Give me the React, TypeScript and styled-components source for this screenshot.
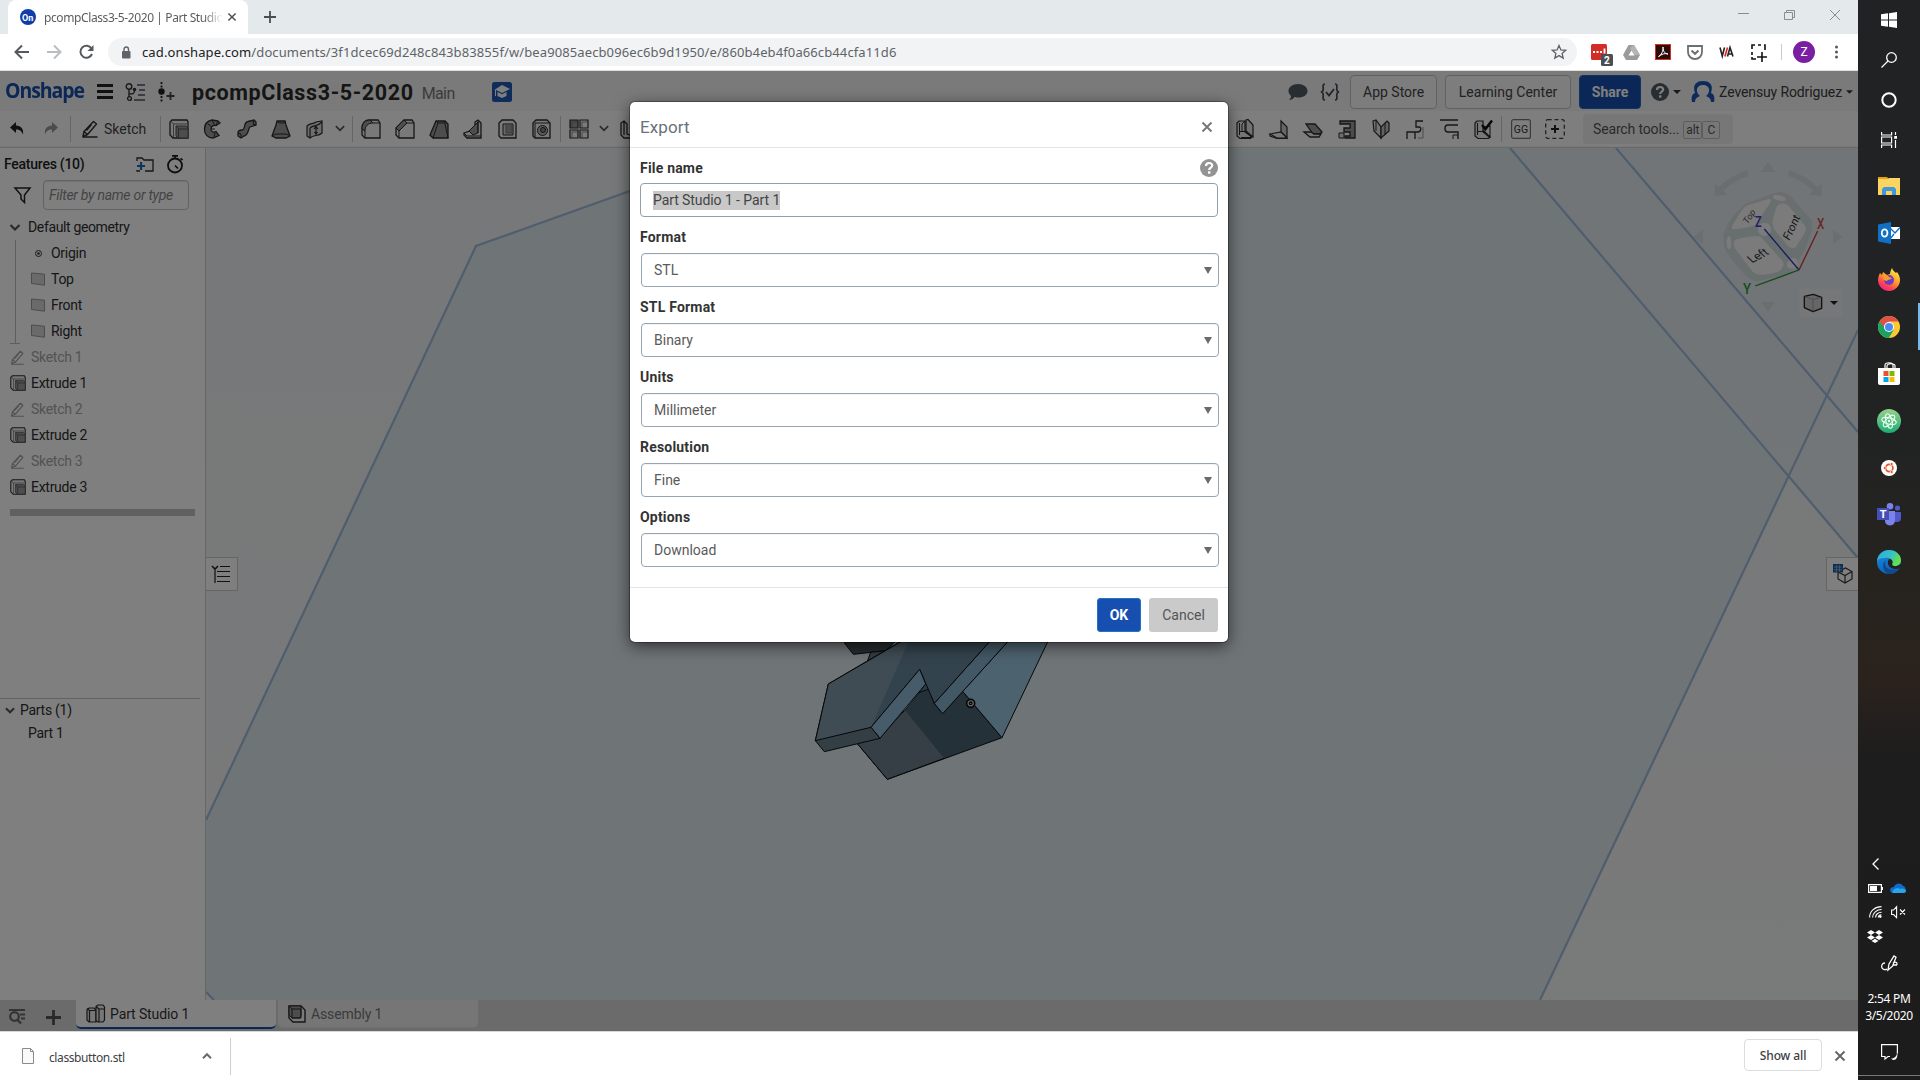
import React from "react";
import styled, { createGlobalStyle } from "styled-components";

const UI = `Roboto, "Liberation Sans", sans-serif`;
const SYS = `"Noto Sans", "Open Sans", sans-serif`;

const Global = createGlobalStyle`
  * { box-sizing: border-box; }
  html, body { margin: 0; padding: 0; background: #fff; overflow: hidden; }
  body { font-family: ${UI}; font-size: 14px; color: #333; }
  svg { display: block; flex: none; overflow: visible; }
`;

/* ---------- shared ---------- */
const Screen = styled.div`
  width: 1920px;
  height: 1080px;
  display: flex;
  overflow: hidden;
`;
const Browser = styled.div`
  width: 1858px;
  display: flex;
  flex-direction: column;
`;
const Label = styled.span<{ $ls?: number; $size?: number; $w?: number; $color?: string; $sys?: boolean; $drop?: number }>`
  white-space: pre;
  font-family: ${(p) => (p.$sys ? SYS : UI)};
  font-size: ${(p) => p.$size ?? 14}px;
  font-weight: ${(p) => p.$w ?? 400};
  letter-spacing: ${(p) => p.$ls ?? 0}px;
  color: ${(p) => p.$color ?? "inherit"};
  margin-top: ${(p) => p.$drop ?? 0}px;
`;
const Spacer = styled.div<{ $w?: number }>`
  ${(p) => (p.$w === undefined ? "flex: 1;" : `width: ${p.$w}px; flex: none;`)}
`;
const VSpace = styled.div<{ $h: number }>`
  height: ${(p) => p.$h}px;
  flex: none;
`;
const Slot = styled.div<{ $w?: number }>`
  width: ${(p) => p.$w ?? 34}px;
  flex: none;
  display: flex;
  align-items: center;
  justify-content: center;
`;

type IcoProps = { w?: number; h?: number; vb?: string; children: React.ReactNode };
const Ico = ({ w = 20, h = 20, vb, children }: IcoProps) => (
  <svg width={w} height={h} viewBox={vb ?? `0 0 ${w} ${h}`} fill="none">
    {children}
  </svg>
);

/* ---------- browser chrome ---------- */
const TabStrip = styled.div`
  height: 34px;
  background: #e4e9ec;
  display: flex;
  align-items: center;
  padding-left: 8px;
`;
const Tab = styled.div`
  width: 240px;
  height: 34px;
  background: #fff;
  border-radius: 8px 8px 0 0;
  display: flex;
  align-items: center;
  padding: 0 10px 0 12px;
`;
const TabTitle = styled.div`
  width: 182px;
  margin: 0 0 0 8px;
  white-space: nowrap;
  font: 12px ${SYS};
  letter-spacing: -0.4px;
  color: #5a5d60;
  mask-image: linear-gradient(90deg, #000 88%, transparent 98%);
`;
const NavBar = styled.div`
  height: 37px;
  background: #fff;
  border-bottom: 1px solid #dcdfe0;
  display: flex;
  align-items: center;
`;
const UrlPill = styled.div`
  width: 1469px;
  height: 28px;
  border-radius: 14px;
  background: #f1f3f4;
  display: flex;
  align-items: center;
  padding: 0 10px 0 13px;
`;
const Avatar = styled.div`
  width: 22px;
  height: 22px;
  border-radius: 50%;
  background: #7b1fa2;
  color: #fff;
  font: 12px/22px ${UI};
  text-align: center;
`;

/* ---------- application ---------- */
const Application = styled.div`
  position: relative;
  height: 960px;
  display: flex;
  flex-direction: column;
`;
const Header = styled.div`
  height: 40px;
  background: #f5f5f5;
  display: flex;
  align-items: center;
  padding-top: 1px;
`;
const Logo = styled.span`
  width: 79px;
  margin-left: 5px;
  margin-top: -4px;
  font: 700 21.5px/26px "Open Sans", sans-serif;
  letter-spacing: -1.15px;
  color: #174fa9;
  white-space: nowrap;
  transform: scaleX(0.905);
  transform-origin: left;
`;
const HeaderButton = styled.div<{ $w: number; $primary?: boolean }>`
  width: ${(p) => p.$w}px;
  height: 34px;
  border: 1px solid ${(p) => (p.$primary ? "#1f6bc0" : "#c2c2c2")};
  border-radius: 4px;
  background: ${(p) => (p.$primary ? "#174fb0" : "#fbfbfb")};
  color: ${(p) => (p.$primary ? "#fff" : "#444")};
  font-weight: ${(p) => (p.$primary ? 700 : 400)};
  display: flex;
  align-items: center;
  justify-content: center;
`;
const Toolbar = styled.div`
  height: 36px;
  background: #fdfdfd;
  border-bottom: 1px solid #f3f4f5;
  display: flex;
  align-items: center;
`;
const Sep = styled.div<{ $l?: number; $r?: number }>`
  width: 1px;
  height: 26px;
  flex: none;
  background: #cdcdcd;
  margin: 0 ${(p) => p.$r ?? 1}px 0 ${(p) => p.$l ?? 2}px;
`;
const SearchTools = styled.div`
  width: 150px;
  height: 30px;
  border-radius: 4px;
  background: #efefef;
  display: flex;
  align-items: center;
  padding-left: 10px;
  color: #555;
`;
const Key = styled.span<{ $w: number }>`
  width: ${(p) => p.$w}px;
  height: 18px;
  border: 1px solid #bbb;
  border-radius: 2px;
  font-size: 12px;
  line-height: 16px;
  text-align: center;
  margin-top: 2px;
  color: #555;
`;
const Workspace = styled.div`
  height: 853px;
  display: flex;
  border-top: 1px solid #d0d2d4;
`;
const Sidebar = styled.div`
  width: 206px;
  height: 852px;
  background: #fff;
  border-right: 1px solid #cfcfcf;
  display: flex;
  flex-direction: column;
  letter-spacing: -0.28px;
`;
const FeatureHead = styled.div`
  height: 32px;
  display: flex;
  align-items: center;
  padding-left: 4px;
  color: #222;
`;
const FilterRow = styled.div`
  height: 30px;
  display: flex;
  align-items: center;
  padding-left: 14px;
`;
const FilterInput = styled.div`
  width: 146px;
  height: 30px;
  margin-left: 12px;
  border: 1px solid #c6c6c6;
  border-radius: 4px;
  box-shadow: inset 0 1px 1px rgba(0, 0, 0, 0.12);
  padding-left: 5px;
  line-height: 28px;
  font-style: italic;
  color: #888;
  white-space: nowrap;
`;
const Tree = styled.div`
  padding-top: 4px;
  height: 276px;
`;
const Row = styled.div<{ $indent?: number; $gap?: number; $dim?: boolean }>`
  height: 26px;
  display: flex;
  align-items: center;
  gap: ${(p) => p.$gap ?? 5}px;
  padding-left: ${(p) => p.$indent ?? 10}px;
  color: ${(p) => (p.$dim ? "#a6a6a6" : "#2e2e2e")};
  white-space: nowrap;
`;
const Branch = styled.div`
  margin-left: 15px;
  border-left: 1px solid #bdbdbd;
  height: 104px;
`;
const BranchFoot = styled.div`
  width: 10px;
  height: 1px;
  margin: -1px 0 0 10px;
  background: #bdbdbd;
`;
const RollbackBar = styled.div`
  width: 185px;
  height: 7px;
  margin: 9px 0 0 10px;
  background: #c0c0c0;
`;
const PartsPanel = styled.div`
  width: 200px;
  margin-top: auto;
  height: 302px;
  border-top: 1px solid #c4c4c4;
`;
const PartsRow = styled.div<{ $indent: number; $h: number }>`
  height: ${(p) => p.$h}px;
  padding-left: ${(p) => p.$indent}px;
  display: flex;
  align-items: center;
  gap: 5px;
  color: #2e2e2e;
`;
const Canvas = styled.div`
  position: relative;
  width: 1652px;
  height: 852px;
  background: linear-gradient(#eef0f2, #f3f4f5);
  overflow: hidden;
`;
const PanelToggle = styled.div<{ $right?: boolean }>`
  position: absolute;
  top: 409px;
  ${(p) => (p.$right ? "right: 0; border-right: 0 !important;" : "left: -1px; border-left: 0 !important;")}
  width: ${(p) => (p.$right ? 32 : 33)}px;
  height: 34px;
  background: #fff;
  border: 1px solid #cacaca;
  display: flex;
  align-items: center;
  justify-content: center;
`;
const BottomTabs = styled.div`
  height: 31px;
  background: #d6d6d6;
  display: flex;
  align-items: flex-start;
`;
const TabTools = styled.div`
  width: 76px;
  height: 31px;
  display: flex;
  align-items: center;
  padding-left: 9px;
`;
const DocTab = styled.div<{ $active?: boolean }>`
  width: 200px;
  height: ${(p) => (p.$active ? 29 : 28)}px;
  margin-right: 2px;
  border-radius: 0 0 5px 5px;
  background: ${(p) => (p.$active ? "#fff" : "#ececec")};
  color: ${(p) => (p.$active ? "#333" : "#777")};
  border-bottom: ${(p) => (p.$active ? "2px solid #174fa9" : "1px solid #e0e0e0")};
  display: flex;
  align-items: center;
  gap: 5px;
  padding-left: 10px;
  letter-spacing: -0.12px;
`;

/* ---------- export dialog ---------- */
const Overlay = styled.div`
  position: absolute;
  inset: 0;
  background: rgba(0, 0, 0, 0.5);
  display: flex;
  justify-content: center;
  align-items: flex-start;
  padding-top: 31px;
`;
const Dialog = styled.div`
  width: 598px;
  height: 540px;
  background: #fff;
  border-radius: 5px;
  box-shadow: 0 0 0 1px rgba(0, 0, 0, 0.3), 0 4px 16px rgba(0, 0, 0, 0.6);
  display: flex;
  flex-direction: column;
`;
const DialogHead = styled.div`
  height: 46px;
  border-bottom: 1px solid #e2e4e6;
  display: flex;
  align-items: center;
  justify-content: space-between;
  padding: 4px 16px 0 10px;
  color: #67727c;
`;
const DialogBody = styled.div`
  flex: 1;
  padding: 5px 9px 0 10px;
`;
const Field = styled.div`
  height: 70px;
`;
const FieldLabel = styled.div<{ $first?: boolean }>`
  height: 30px;
  padding: 0 1px ${(p) => (p.$first ? 0 : 2)}px 0;
  display: flex;
  align-items: center;
  justify-content: space-between;
  font-weight: 700;
  letter-spacing: 0.2px;
  color: #333;
`;
const TextInput = styled.div`
  width: 578px;
  height: 34px;
  border: 1px solid #8f9fb0;
  border-radius: 4px;
  padding-left: 12px;
  display: flex;
  align-items: center;
`;
const Selected = styled.span`
  background: #c8c8c8;
  height: 19px;
  line-height: 19px;
  letter-spacing: -0.08px;
  color: #444;
`;
const Select = styled.div`
  width: 578px;
  height: 34px;
  margin-left: 1px;
  border: 1px solid #97a4b4;
  border-radius: 4px;
  box-shadow: inset 0 1px 1px rgba(0, 0, 0, 0.05);
  padding: 0 6px 0 12px;
  display: flex;
  align-items: center;
  justify-content: space-between;
  color: #5a5a5a;
`;
const DialogFoot = styled.div`
  height: 55px;
  border-top: 1px solid #e2e4e6;
  display: flex;
  justify-content: flex-end;
  gap: 8px;
  padding: 10px 10px 0 0;
`;
const DialogButton = styled.div<{ $primary?: boolean }>`
  width: ${(p) => (p.$primary ? 44 : 69)}px;
  height: 34px;
  line-height: ${(p) => (p.$primary ? 32 : 34)}px;
  text-align: center;
  border-radius: 3px;
  border: ${(p) => (p.$primary ? "1px solid #2273c6" : "0")};
  background: ${(p) => (p.$primary ? "#174fb0" : "#cacaca")};
  color: ${(p) => (p.$primary ? "#fff" : "#555")};
  font-weight: ${(p) => (p.$primary ? 700 : 400)};
`;

/* ---------- download shelf ---------- */
const Shelf = styled.div`
  height: 49px;
  background: #fff;
  border-top: 1px solid #d6d8da;
  display: flex;
  align-items: center;
`;
const ShelfSep = styled.div`
  width: 1px;
  height: 37px;
  background: #cfcfcf;
`;
const ShowAll = styled.div`
  width: 78px;
  height: 32px;
  border: 1px solid #dadce0;
  border-radius: 4px;
  display: flex;
  align-items: center;
  justify-content: center;
  color: #3c4043;
  margin-bottom: 2px;
`;

/* ---------- taskbar ---------- */
const Taskbar = styled.div`
  width: 62px;
  height: 1080px;
  background: linear-gradient(#202224 0, #212323 440px, #26231e 580px, #2b221d 680px, #1d1d1d 760px, #1c1c1c 100%);
  display: flex;
  flex-direction: column;
  color: #fff;
`;
const TaskItem = styled.div<{ $h: number; $active?: boolean }>`
  height: ${(p) => p.$h}px;
  display: flex;
  align-items: center;
  justify-content: center;
  ${(p) => p.$active && "box-shadow: inset -2px 0 0 #76b9ed;"}
`;
const TrayRow = styled.div`
  height: 24px;
  display: grid;
  grid-template-columns: 20px 20px;
  column-gap: 3px;
  padding-left: 7px;
  align-items: center;
  justify-items: center;
`;
const Clock = styled.div`
  height: 36px;
  text-align: center;
  font: 12px/17px ${SYS};
  letter-spacing: -0.3px;
`;
const ShowDesktop = styled.div`
  height: 1px;
  background: #777;
  margin-top: auto;
  margin-bottom: 4px;
`;

/* ---------- icons ---------- */
const K = "#2c2c2c";
const G = "#9a9a9a";
const Caret = ({ c = "#333", w = 8 }: { c?: string; w?: number }) => (
  <Ico w={w} h={4} vb="0 0 8 4"><path d="M0 0h8L4 4z" fill={c} /></Ico>
);
const Chevron = ({ w = 11, c = "#555", sw = 2.2 }: { w?: number; c?: string; sw?: number }) => (
  <Ico w={w} h={7} vb="0 0 11 7"><path d="M1 1l4.500 4.500L10 1" stroke={c} strokeWidth={sw} /></Ico>
);
const Cross = ({ s, c, sw = 1.5 }: { s: number; c: string; sw?: number }) => (
  <Ico w={s} h={s} vb="0 0 10 10"><path d="M.5.5l9 9M9.500.5l-9 9" stroke={c} strokeWidth={sw} /></Ico>
);
const Help = ({ c, s = 18 }: { c: string; s?: number }) => (
  <Ico w={s} h={s} vb="0 0 18 18">
    <circle cx="9" cy="9" r="9" fill={c} />
    <path d="M6 7c0-4 6.200-3.800 6.200-.5C12.200 8.600 9.200 8.600 9.200 11" stroke="#fff" strokeWidth="2.200" />
    <rect x="8" y="12.300" width="2.400" height="2.400" fill="#fff" />
  </Ico>
);
const Pencil = ({ c = K, s = 18 }: { c?: string; s?: number }) => (
  <Ico w={s} h={s} vb="0 0 18 18">
    <path d="M2 16.500l1-5L12.500 1.500l3 2.500-9 10.500zM3 11.500l3.500 3" stroke={c} strokeWidth="1.400" strokeLinejoin="round" />
    <path d="M1.500 17h15M10.500 4.500l-5 6" stroke={c} strokeWidth="1.300" />
  </Ico>
);
const Extrude = ({ s = 20 }: { s?: number }) => (
  <Ico w={s} h={s} vb="0 0 20 20">
    <path d="M1 3l2-2h15l1 2v16H4l-3-3z" fill="#f0f0f0" stroke={K} strokeWidth="1.300" />
    <path d="M4.500 5v13M4.500 5H18M2 2.500L4.500 5" stroke="#777" strokeWidth="1" />
    <path d="M7 7h10l2 2v10H9l-2-2z" fill={G} stroke="#555" />
    <path d="M7 7l2.500 3H19M9.500 10v9" stroke="#555" />
  </Ico>
);
const Plane = () => (
  <Ico w={14} h={14}><path d="M.5 1l13 1.200v11L.5 11.500z" fill="#d4d4d4" stroke="#999" /></Ico>
);
const BoxBase = "M2 4l3-3h11l3 3v15H4l-2-2z";

const T = {
  revolve: (
    <Ico>
      <path d="M15 2L9 1C4 2 1.500 6 1.500 10.500c0 5 3.500 8.500 8.500 8.500l6-2.500-3-4c-2 1.200-5 .5-5-2.500S11 6 13 6.500L17 4z" fill={G} stroke={K} strokeWidth="1.300" />
      <path d="M11 19l1-5M9 1l2.500 5M15 2l-2 4.500M8 10h4M5 5l4 3" stroke={K} />
    </Ico>
  ),
  sweep: (
    <Ico>
      <path d="M1 14c0-2 1-3 4-3 4 0 1-8 6-8.500L17 1l2 2v3l-6 2c-2 1-1 8-6 9l-3 2-3-2z" fill={G} stroke={K} strokeWidth="1.300" />
      <path d="M1 14l3 1v4M17 1l-1 4 3 1" stroke={K} />
    </Ico>
  ),
  loft: (
    <Ico>
      <path d="M6 2l8 0 1 4 4 11-4 2H5l-4-2L5 6z" fill={G} stroke={K} strokeWidth="1.300" />
      <path d="M6 2l2 2h5l1-2M1.500 16.500L5 15h10l3.500 1.500" stroke={K} />
    </Ico>
  ),
  thicken: (
    <Ico>
      <path d="M2 7c4-4 5-1 9-4l6-1v12c-4 4-8 1-12 5l-3-2z" fill="#ddd" stroke={K} strokeWidth="1.200" />
      <path d="M5 9c4-4 6 0 12-6M5 9v10M11 8v7M9 10l2-2.500L13 10M9.500 13l1.500 2 1.500-2" stroke={K} strokeWidth="1.200" />
    </Ico>
  ),
  fillet: (
    <Ico>
      <path d="M1 10C1 4 4 1 9 1h8l2 3v15H4l-3-3z" fill="#f3f3f3" stroke={K} strokeWidth="1.300" />
      <path d="M1 10l3 2C4 7 7 4 12 4l-3-3C4 1 1 4 1 10z" fill={G} stroke={K} />
      <path d="M4 12v7M12 4h7" stroke={K} />
    </Ico>
  ),
  chamfer: (
    <Ico>
      <path d="M1 9l8-8h8l2 3v15H4l-3-3z" fill="#f3f3f3" stroke={K} strokeWidth="1.300" />
      <path d="M1 9l8-8 3 3-8 8z" fill={G} stroke={K} />
      <path d="M4 12v7M12 4h7" stroke={K} />
    </Ico>
  ),
  draft: (
    <Ico>
      <path d="M1 16L7 2h9l3 3v14H4z" fill={G} stroke={K} strokeWidth="1.300" />
      <path d="M7 2L9 4h7M9 4L4 19M16 2v3l3 14" stroke={K} />
    </Ico>
  ),
  rib: (
    <Ico>
      <path d="M1 14l11-4V3l3-2 3 3v15H4l-3-3z" fill="#eee" stroke={K} strokeWidth="1.300" />
      <path d="M6 12l9-9v11l-5 2z" fill={G} stroke={K} />
      <path d="M1 14l3 3h14M15 1v13" stroke={K} />
    </Ico>
  ),
  shell: (
    <Ico>
      <path d={BoxBase} fill="#f3f3f3" stroke={K} strokeWidth="1.300" />
      <path d="M6 5h10v11H6z" fill="#d0d0d0" stroke={K} />
      <path d="M9 5h6v9H9z" fill={G} stroke="#777" />
    </Ico>
  ),
  hole: (
    <Ico>
      <path d={BoxBase} fill="#f0f0f0" stroke={K} strokeWidth="1.300" />
      <path d="M4 4h15M4 4v15" stroke={K} />
      <circle cx="11.500" cy="11.500" r="5" fill="#bbb" stroke={K} />
      <circle cx="12" cy="11" r="2.500" fill="#888" stroke={K} />
    </Ico>
  ),
  pattern: (
    <Ico>
      <path d="M1 1h8v8H1z" fill={G} stroke={K} strokeWidth="1.200" />
      <path d="M11 1h8v8h-8zM1 11h8v8H1zM11 11h8v8h-8z" fill="#f6f6f6" stroke={K} strokeWidth="1.200" />
      <path d="M3 3v6M3 3h6M13 3v6M13 3h6M3 13v6M3 13h6M13 13v6M13 13h6" stroke="#666" strokeWidth=".7" />
    </Ico>
  ),
  bool: (
    <Ico>
      <path d="M2 4l3-2 3 3v10l10 3-2 1H5l-3-3zM5 2v14" fill="#eee" stroke={K} strokeWidth="1.300" />
    </Ico>
  ),
  split: (
    <Ico>
      <path d="M2 4l2-2h6v11l7 5-1.500 1.500H5L2 17z" fill="#eee" stroke={K} strokeWidth="1.200" />
      <path d="M11 1l2-.5 5 5.500v12l-7-6z" fill="#e4e4e4" stroke={K} strokeWidth="1.200" />
      <path d="M4.500 4v12M4.500 12.500h6l6 6H6M10 2L7 5v7" stroke={K} />
    </Ico>
  ),
  sheetA: (
    <Ico>
      <path d="M12 2l6 6v11l-6-6z" fill="#ccc" stroke={K} strokeWidth="1.200" />
      <path d="M1 15l11-2 6 6H8z" fill="#eee" stroke={K} strokeWidth="1.200" />
      <path d="M1 15v2l7 2.500h10" stroke={K} strokeWidth="1.200" />
    </Ico>
  ),
  sheetB: (
    <Ico>
      <path d="M3 5h9l7 8-2 2h-7z" fill={G} stroke={K} strokeWidth="1.300" />
      <path d="M1 13h7l3 2h7l-2 3H7z" fill="#eee" stroke={K} strokeWidth="1.300" />
    </Ico>
  ),
  flange: (
    <Ico>
      <path d="M3 2h15v17H8v-2h5v-4H7V9h6V5H3z" fill={G} stroke={K} strokeWidth="1.300" />
      <path d="M2 14h5v5H2zM10 5h3v4" fill="#ddd" stroke={K} />
    </Ico>
  ),
  bend: (
    <Ico>
      <path d="M2 2l3-1 5 7v11l-7-7z" fill="#e8e8e8" stroke={K} strokeWidth="1.200" />
      <path d="M18 4l-2-2-6 6v11l8-7z" fill="#c4c4c4" stroke={K} strokeWidth="1.200" />
      <path d="M5 1v11M14 4v12" stroke={K} />
    </Ico>
  ),
  joint: (
    <Ico>
      <path d="M18 2h-7v6h3c3 0 2 5-1 5h-3M2 20v-7h8v7" stroke={K} strokeWidth="1.300" />
      <path d="M13 19h5V8" stroke="#999" />
    </Ico>
  ),
  corner: (
    <Ico>
      <path d="M1 1h18M19 6H9q-3 0-3 3.500T9 13h10v7" stroke={K} strokeWidth="1.400" />
      <path d="M14 20v-4h5" stroke={K} />
    </Ico>
  ),
  finish: (
    <Ico>
      <path d="M2 4l2-2h6v11l7 5-1.500 1.500H5L2 17z" fill="#eee" stroke={K} strokeWidth="1.200" />
      <path d="M11 8l6-1v11l-6-6zM4.500 4v12M4.500 12.500h6l6 6" stroke={K} strokeWidth="1.100" />
      <path d="M9 6l3.500 4L19 1.500" stroke="#111" strokeWidth="2.600" />
    </Ico>
  ),
};

/* ---------- 3D view ---------- */
const Scene = () => (
  <svg width="1652" height="852" viewBox="206 148 1652 852">
    <path d="M206 820L476 246 750 148H1510L1858 558V330L1540 1000H213L206 992z" fill="#dfeaf0" fillOpacity=".65" />
    <path d="M476 246L206 820V992L213 1000H1540L1858 330V148H750z" fill="#d7e4ea" fillOpacity=".45" />
    <g stroke="#9ebbdb" strokeWidth="2.200" fill="none">
      <path d="M206 820L476 246 750 148" />
      <path d="M1510 148l348 410M1616 148l242 284M1858 330l-318 670M206 992l8 8" />
    </g>
    <g transform="translate(780 620) scale(.33333)" stroke="#0c0f12" strokeWidth="3" strokeLinejoin="round">
      <path d="M194 30v40l26 33 98-11 60-60z" fill="#4c5860" />
      <path d="M272 97l-10 27 56-32z" fill="#6b7c88" />
      <path d="M233 372l89 106 344-125-118-139-60 67-25-31-23-60-65 82z" fill="#4a6273" />
      <path d="M233 372l89 106 170-63-116-143-76 83z" fill="#6c7f8a" stroke="none" />
      <path d="M376 272l64-82 6 18-36 10" fill="#5d7686" stroke="none" />
      <path d="M415 218l30-10M233 372l89 106 170-63" fill="none" />
      <path d="M548 214l118 139L820 30H715z" fill="#9ac4de" />
      <path d="M463 250l25 31L715 30H660z" fill="#86b0cb" />
      <path d="M145 192L420 30h240L463 250l-44-102-146 174-167 40z" fill="#66869b" />
      <path d="M145 192L385 52v14L273 322l-167 40z" fill="#7e98a8" stroke="none" />
      <path d="M106 362l39-170L385 52" fill="none" />
      <path d="M419 148l18 44-137 163-27-33z" fill="#8fb8d4" />
      <path d="M106 362l167-40 27 33-167 40z" fill="#697f8a" />
      <circle cx="572" cy="250" r="12" fill="#d8d8d8" strokeWidth="5" />
      <circle cx="572" cy="250" r="4" fill="none" strokeWidth="4" />
    </g>
    <g transform="translate(1660 140) scale(.33333)">
      <g fill="#d2dcdf">
        <path d="M302 96l22-29 22 29zM302 486l22 29 22-29zM519 269l29 22-29 22zM129 269l-29 22 29 22z" />
        <path d="M262 90c-30 10-60 26-84 50l-14-8v36l38-4-12-12c22-20 46-34 74-44z" />
        <path d="M387 90c30 10 60 26 84 50l14-8v36l-38-4 12-12c-22-20-46-34-74-44z" />
        <path d="M190 290c0-20 30-70 48-80l20-20c40-10 70-30 100-34 20 0 30 10 36 14l60 70c10 30-10 60-20 90l-30 50c-10 20-30 30-50 30l-60 14c-20 0-30-14-40-20l-50-60c-10-14-14-34-14-54z" />
      </g>
      <g fill="#f6f7f8">
        <path d="M262 196l66-20c8 0 4 10 0 16l-40 62c-8 6-50 12-66 14-10 0-6-10-4-14l32-50z" />
        <path d="M350 200c10-12 24-14 34-4l50 60c8 12 2 20-4 30l-22 34c-8 8-20 4-26-4l-36-44c-12-16-10-34 4-72z" />
        <path d="M226 300c10-6 60-14 76-10l66 74c6 10 0 20-6 26-10 10-50 16-66 14-10-2-16-6-22-14l-46-60c-6-8-10-24-2-30z" />
        <circle cx="313" cy="268" r="20" />
        <ellipse cx="207" cy="308" rx="7" ry="20" />
        <ellipse cx="358" cy="174" rx="20" ry="8" transform="rotate(14 358 174)" />
        <ellipse cx="397" cy="370" rx="18" ry="14" transform="rotate(-40 397 370)" />
      </g>
      <g fill="#333" fontFamily={UI} fontSize="35">
        <text transform="translate(262 254) rotate(-55) skewX(-8)" fontSize="27" fill="#555">Top</text>
        <text transform="translate(388 304) rotate(-65) skewX(-8)" fontSize="34">Front</text>
        <text transform="translate(276 370) rotate(-28) skewX(18)">Left</text>
      </g>
      <g strokeWidth="4" fill="none">
        <path d="M417 390L473 273" stroke="#d03a3a" />
        <path d="M417 390L313 267" stroke="#3434c0" />
        <path d="M417 390L286 438" stroke="#2f9a3a" />
      </g>
      <g fontFamily={UI} fontSize="42" fontWeight="500">
        <text x="471" y="268" fill="#d05050" textLength="22" lengthAdjust="spacingAndGlyphs">X</text>
        <text x="285" y="262" fill="#3c3cc8" textLength="20" lengthAdjust="spacingAndGlyphs">Z</text>
        <text x="249" y="461" fill="#2f9a3a" textLength="24" lengthAdjust="spacingAndGlyphs">Y</text>
      </g>
      <rect x="418" y="446" width="130" height="84" fill="#f8f8f8" fillOpacity=".3" />
      <g stroke="#222" strokeWidth="4" strokeLinejoin="round">
        <path d="M433 469l27-6 25 9v33l-26 10-26-12z" fill="#ccc" />
        <path d="M433 469l26 9v37M459 478l26-6" fill="none" strokeWidth="2" stroke="#888" />
      </g>
      <path d="M510 483h24l-12 12z" fill="#222" />
    </g>
  </svg>
);

/* ---------- taskbar logos ---------- */
const L = {
  win: (
    <Ico w={16} h={16}><path d="M0 2.300l7-1v6.200H0zM8 1.200L16 0v7.500H8zM0 8.500h7v6.200l-7-1zM8 8.500h8V16l-8-1.200z" fill="#fff" /></Ico>
  ),
  search: (
    <Ico w={16} h={16}><circle cx="10.500" cy="5.500" r="4.800" stroke="#fff" strokeWidth="1.300" /><path d="M7 9L.5 15.500" stroke="#fff" strokeWidth="1.300" /></Ico>
  ),
  cortana: <Ico w={16} h={16}><circle cx="8" cy="8" r="6.700" stroke="#fff" strokeWidth="2" /></Ico>,
  view: (
    <Ico w={16} h={16}><path d="M.6 0v3h10V0M.6 16v-3h10v3M.6 5h10v6H.6zM14.500 0v3M14.500 8v8" stroke="#fff" strokeWidth="1.200" /><rect x="13.200" y="4" width="2.800" height="2.800" fill="#fff" /></Ico>
  ),
  explorer: (
    <Ico w={22} h={18}>
      <path d="M0 0h9l2 2H0z" fill="#e5a50a" /><path d="M0 2h10l1-1h11v17H0z" fill="#fcd462" />
      <path d="M4 18v-6l2-2h10l2 2v6h-4v-4H8v4z" fill="#3f97dc" />
    </Ico>
  ),
  outlook: (
    <Ico w={22} h={22}>
      <path d="M12 5h10v12H12z" fill="#fff" /><path d="M12 6l5 5 5-5.500M12 17l4-5" stroke="#0f70c4" strokeWidth="1.400" />
      <path d="M0 2.500L13 0v22L0 19.500z" fill="#0f70c4" /><ellipse cx="6.600" cy="11" rx="2.800" ry="3.700" stroke="#fff" strokeWidth="1.800" />
    </Ico>
  ),
  firefox: (
    <Ico w={22} h={23}>
      <defs>
        <linearGradient id="ff" x1=".8" y1="0" x2=".2" y2="1"><stop offset="0" stopColor="#fff14a" /><stop offset=".45" stopColor="#ff9a2a" /><stop offset=".75" stopColor="#ff4056" /><stop offset="1" stopColor="#e0209a" /></linearGradient>
      </defs>
      <path d="M14 0c1 3 3 4 4 5l1-1c2 3 3 5 3 8 0 6-5 11-11 11S0 18 0 12c0-3 1-5 2-7l2 2 1-3 4 3 3-1c0-2 1-4 2-6z" fill="url(#ff)" />
      <circle cx="11" cy="12" r="5" fill="#6a3fc4" /><path d="M4 7c3-1 6 0 7 2l3 1c-1 2-4 1-5 3-3 0-5-3-5-6z" fill="#ff9a2a" />
    </Ico>
  ),
  chrome: (
    <Ico w={22} h={22}>
      <circle cx="11" cy="11" r="11" fill="#fcc934" />
      <path d="M11 5.500h9.500A11 11 0 0 0 1.500 5.500l5 8z" fill="#de5246" />
      <path d="M1.500 5.500A11 11 0 0 0 10.800 22l5-8.300H8z" fill="#1aa260" />
      <circle cx="11" cy="11" r="5" fill="#fff" /><circle cx="11" cy="11" r="4" fill="#4a8af4" />
    </Ico>
  ),
  store: (
    <Ico w={22} h={23}>
      <path d="M7 6V3c0-3 8-3 8 0v3M9 6V4c0-3 8-3 8 0v2" stroke="#fff" strokeWidth="1.200" />
      <path d="M0 6h22v15q0 2-2 2H2q-2 0-2-2z" fill="#fff" />
      <path d="M5.500 9h5v5h-5z" fill="#f05022" /><path d="M11.500 9h5v5h-5z" fill="#7fba00" /><path d="M5.500 15h5v5h-5z" fill="#00a4ef" /><path d="M11.500 15h5v5h-5z" fill="#ffb900" />
    </Ico>
  ),
  atom: (
    <Ico w={24} h={24}>
      <defs><linearGradient id="at" x2="0" y2="1"><stop stopColor="#9ad08c" /><stop offset="1" stopColor="#19ad74" /></linearGradient></defs>
      <circle cx="12" cy="12" r="12" fill="url(#at)" />
      <g stroke="#e8fff2" strokeWidth="1"><ellipse cx="12" cy="12" rx="7.500" ry="3" transform="rotate(15 12 12)" /><ellipse cx="12" cy="12" rx="7.500" ry="3" transform="rotate(75 12 12)" /><ellipse cx="12" cy="12" rx="7.500" ry="3" transform="rotate(135 12 12)" /></g>
      <circle cx="12" cy="12" r="1.200" fill="#e8fff2" />
    </Ico>
  ),
  ubuntu: (
    <Ico w={16} h={16}>
      <circle cx="8" cy="8" r="8" fill="#fff" /><circle cx="8.300" cy="8" r="3.600" stroke="#e0562b" strokeWidth="1.700" />
      <g fill="#e0562b" stroke="#fff" strokeWidth=".7"><circle cx="3.800" cy="8" r="1.500" /><circle cx="10.700" cy="4" r="1.500" /><circle cx="10.700" cy="12" r="1.500" /></g>
    </Ico>
  ),
  teams: (
    <Ico w={24} h={23}>
      <circle cx="20.500" cy="5" r="2.600" fill="#5059c9" /><circle cx="13" cy="3.300" r="3.300" fill="#7b83eb" />
      <path d="M17 9h7v6q0 4-4 4h-3z" fill="#5059c9" /><path d="M8 8h10v9q0 5-5 5.500-5-.5-5-5z" fill="#7b83eb" />
      <path d="M0 5h12v12H0z" fill="#464eb8" /><text x="2.700" y="14.800" fontSize="11" fontWeight="700" fill="#fff" fontFamily={UI}>T</text>
    </Ico>
  ),
  edge: (
    <Ico w={24} h={24}>
      <defs>
        <linearGradient id="e1" x2="1" y2=".4"><stop stopColor="#2ea8e0" /><stop offset=".6" stopColor="#35c1c9" /><stop offset="1" stopColor="#66e04a" /></linearGradient>
        <linearGradient id="e2" x2=".4" y2="1"><stop stopColor="#1c8fe0" /><stop offset="1" stopColor="#0a62b8" /></linearGradient>
      </defs>
      <circle cx="12" cy="12" r="12" fill="url(#e2)" />
      <path d="M0 11C1 4 6 0 12 0c7 0 12 5 12 10 0 4-3 6-6 6-4 0-3-2-2.500-4 0-3-4-5-8-4-4 0-6 1-7.500 3z" fill="url(#e1)" />
      <path d="M9 10c-3 6 2 12 12 9-3 4-6 5-9 5-6-2-8-10-3-14z" fill="#114a8b" />
      <path d="M12 9c2 0 4 1.500 3.500 3.500-.6 2-.5 3.500 2.500 3.700 2 .1 4-.8 5.500-2.200l1 1c-.8 1.500-1.500 2.500-2.500 3.500C15 21 8 15 12 9z" fill="#212222" />
    </Ico>
  ),
};

const Downloads = () => (
  <Shelf>
    <Spacer $w={22} />
    <Ico w={12} h={16}><path d="M.5.5h8l3 3v12H.5zM8.500.5v3h3" fill="#fafafa" stroke="#8a8a8a" /></Ico>
    <Spacer $w={15} />
    <Label $sys $size={12} $ls={-0.4} $color="#3c4043" $drop={2}>classbutton.stl</Label>
    <Spacer />
    <Ico w={10} h={6}><path d="M1 5.200l4-4 4 4" stroke="#6a6a6a" strokeWidth="2" /></Ico>
    <Spacer $w={18} />
    <ShelfSep />
    <Spacer $w={1513} />
    <ShowAll><Label $sys $size={12} $ls={-0.1} $w={500}>Show all</Label></ShowAll>
    <Spacer $w={13} />
    <Cross s={10} c="#5f6368" sw={1.8} />
    <Spacer $w={13} />
  </Shelf>
);

const FIELDS = [
  ["Format", "STL"],
  ["STL Format", "Binary"],
  ["Units", "Millimeter"],
  ["Resolution", "Fine"],
  ["Options", "Download"],
];

const ExportDialog = () => (
  <Dialog>
    <DialogHead>
      <Label $size={17} $ls={0.1}>Export</Label>
      <Cross s={10} c="#777" sw={1.9} />
    </DialogHead>
    <DialogBody>
      <Field>
        <FieldLabel $first>File name<Help c="#939393" /></FieldLabel>
        <TextInput><Selected>Part Studio 1 - Part 1</Selected></TextInput>
      </Field>
      {FIELDS.map(([name, value]) => (
        <Field key={name}>
          <FieldLabel>{name}</FieldLabel>
          <Select>{value}<Ico w={8} h={7}><path d="M0 0h8L4 7z" fill="#6a6a6a" /></Ico></Select>
        </Field>
      ))}
    </DialogBody>
    <DialogFoot>
      <DialogButton $primary>OK</DialogButton>
      <DialogButton>Cancel</DialogButton>
    </DialogFoot>
  </Dialog>
);

const FeatureList = () => (
  <Sidebar>
    <FeatureHead>
      <Label $w={500} $ls={-0.25}>Features (10)</Label>
      <Spacer />
      <Ico w={18} h={15}>
        <path d="M1 4V1h5l2 2h9v11H9M1 13v1h3" stroke={K} strokeWidth="1.300" />
        <path d="M5 5v8M1 9h8" stroke="#1b6fb5" strokeWidth="2.200" />
      </Ico>
      <Spacer $w={12} />
      <Ico w={18} h={18}>
        <circle cx="9" cy="10.500" r="7" stroke="#1d1d1d" strokeWidth="1.800" />
        <path d="M6 .8h6M9 1v3M14.500 3.500l2 1.500M9 10.500l3 3" stroke="#1d1d1d" strokeWidth="1.700" />
      </Ico>
      <Spacer $w={21} />
    </FeatureHead>
    <FilterRow>
      <Ico w={17} h={16}><path d="M1 1h15l-5.500 7v7.500L7 12V8z" stroke="#222" strokeWidth="1.500" /></Ico>
      <FilterInput>Filter by name or type</FilterInput>
    </FilterRow>
    <Tree>
      <Row $indent={9} $gap={7}><Chevron w={12} /><Label $ls={-0.36}>Default geometry</Label></Row>
      <Branch>
        <Row $indent={19} $gap={9}>
          <Ico w={7} h={7}><circle cx="3.500" cy="3.500" r="3" stroke="#333" /><circle cx="3.500" cy="3.500" r="1.300" fill="#333" /></Ico>Origin
        </Row>
        {["Top", "Front", "Right"].map((n) => (
          <Row key={n} $indent={15} $gap={6}><Plane />{n}</Row>
        ))}
      </Branch>
      <BranchFoot />
      {[1, 2, 3].map((n) => (
        <React.Fragment key={n}>
          <Row $dim $gap={6}><Pencil c="#a0a0a0" s={15} />{`Sketch ${n}`}</Row>
          <Row><Extrude s={16} />{`Extrude ${n}`}</Row>
        </React.Fragment>
      ))}
      <RollbackBar />
    </Tree>
    <PartsPanel>
      <PartsRow $indent={5} $h={22}><Chevron w={10} />{"Parts (1)"}</PartsRow>
      <PartsRow $indent={28} $h={24}>Part 1</PartsRow>
    </PartsPanel>
  </Sidebar>
);

export default function App() {
  return (
    <Screen>
      <Global />
      <Browser>
        <TabStrip>
          <Tab>
            <Ico w={16} h={16}>
              <circle cx="8" cy="8" r="8" fill="#0f3ea8" />
              <text x="2" y="11.500" fontSize="9" fontWeight="700" fill="#fff" fontFamily={UI}>On</text>
            </Ico>
            <TabTitle>pcompClass3-5-2020 | Part Studio</TabTitle>
            <Spacer $w={2} />
            <Cross s={8} c="#4a4d51" sw={1.8} />
          </Tab>
          <Spacer $w={16} />
          <Ico w={12} h={12}><path d="M6 0v12M0 6h12" stroke="#4a4d51" strokeWidth="1.800" /></Ico>
          <Spacer />
          <Ico w={102} h={10}>
            <path d="M0 3.500h11M46.500 2.500h8v7h-8zM48.500 2.500v-2h8v7h-2M92 0l10 10M102 0L92 10" stroke="#8a8d90" transform="translate(0 -2)" />
          </Ico>
          <Spacer $w={18} />
        </TabStrip>
        <NavBar>
          <Spacer $w={14} />
          <Ico w={80} h={16}>
            <path d="M15 8H2M8 1.500L1.500 8 8 14.500" stroke="#55585c" strokeWidth="2" />
            <path d="M33 8h13M40 1.500L46.500 8 40 14.500" stroke="#bbbec1" strokeWidth="2" />
            <path d="M77.500 4.500A6 6 0 1 0 78 10" stroke="#55585c" strokeWidth="2" /><path d="M79.500 1v6h-6z" fill="#55585c" />
          </Ico>
          <Spacer $w={14} />
          <UrlPill>
            <Ico w={10} h={13}><rect x="1" y="5" width="8.500" height="7.500" rx="1" fill="#5f6368" /><path d="M3 5V3.200c0-3 4.500-3 4.500 0V5" stroke="#5f6368" strokeWidth="1.400" /></Ico>
            <Spacer $w={11} />
            <Label $sys $size={13} $ls={0.12} $color="#202124">cad.onshape.com</Label>
            <Label $sys $size={13} $ls={0.11} $color="#5f6368">/documents/3f1dcec69d248c843b83855f/w/bea9085aecb096ec6b9d1950/e/860b4eb4f0a66cb44cfa11d6</Label>
            <Spacer />
            <Ico w={16} h={16}><path d="M8 1.500l1.900 4.400 4.800.4-3.600 3.100 1.100 4.700L8 11.600l-4.200 2.500 1.100-4.700L1.300 6.300l4.800-.4z" stroke="#5f6368" strokeWidth="1.300" /></Ico>
          </UrlPill>
          <Spacer $w={14} />
          <Ico w={176} h={22}>
            <rect x="0" y="3" width="16" height="16" rx="1.500" fill="#d32d27" />
            <path d="M2 11h2M5.500 11h2M9 11h2M13.500 7.500v5" stroke="#fff" strokeWidth="1.800" />
            <rect x="10" y="13" width="12" height="12" rx="1.500" fill="#4b4e52" />
            <text x="13" y="22.600" fontSize="10" fontWeight="700" fill="#fff" fontFamily={UI}>2</text>
            <path d="M37.500 4h5.500l6 10-3 5H35l-3-5z" fill="#9b9b9b" /><path d="M43 4l6 10h-6l-4-7z" fill="#b4b4b4" /><path d="M40.500 9.500l3 5h-6z" fill="#fff" />
            <rect x="64.500" y="3.500" width="15" height="15" fill="#2a0c0a" stroke="#d8301c" />
            <path d="M67.500 15.500c2.500-1 5-5.500 4.500-9.500 0 5 2 6.500 5 7-3-1-6 0-9.500 2.500z" stroke="#fff" strokeWidth="1" />
            <path d="M97 5h14v6c0 4-3 7-7 7s-7-3-7-7z" fill="#fff" stroke="#6c6f72" strokeWidth="1.800" /><path d="M100.500 9.500l3.500 3.300 3.500-3.300" stroke="#6c6f72" strokeWidth="2" />
            <path d="M129 6.500l2.300 8.500 2.200-8.500" stroke="#222" strokeWidth="1.600" /><path d="M136.500 6.500l-2.600 9" stroke="#d22" strokeWidth="1.600" /><path d="M136.500 15.500l2.500-9 3 9M137.500 13h4" stroke="#222" strokeWidth="1.600" />
            <path d="M161 8V4h3M167 4h3M173 4h1v5M161 11v3M161 16v2h4" stroke="#111" strokeWidth="1.600" /><path d="M171 11v10M166 16h10" stroke="#111" strokeWidth="1.600" />
          </Ico>
          <Spacer $w={14} />
          <Ico w={1} h={16}><path d="M.5 0v16" stroke="#ccc" /></Ico>
          <Spacer $w={11} />
          <Avatar>Z</Avatar>
          <Spacer $w={20} />
          <Ico w={3} h={14}><circle cx="1.500" cy="2" r="1.500" fill="#55585c" /><circle cx="1.500" cy="7" r="1.500" fill="#55585c" /><circle cx="1.500" cy="12" r="1.500" fill="#55585c" /></Ico>
        </NavBar>

        <Application>
          <Header>
            <Logo>Onshape</Logo>
            <Spacer $w={13} />
            <Ico w={16} h={15}><path d="M0 1.500h16M0 7.500h16M0 13.500h16" stroke="#222" strokeWidth="3" /></Ico>
            <Spacer $w={12} />
            <Ico w={21} h={18}>
              <circle cx="4" cy="3.500" r="2.800" stroke="#333" strokeWidth="1.400" /><circle cx="4.500" cy="15.500" r="1.900" stroke="#333" strokeWidth="1.400" />
              <path d="M4 6v8M4 11c4 0 5 0 5.500-3" stroke="#333" strokeWidth="1.400" /><circle cx="9.500" cy="6.500" r="1.800" fill="#333" />
              <path d="M12 2h8M14 7h6M13 12h7M9 17h11" stroke="#4a5560" strokeWidth="1.500" />
            </Ico>
            <Spacer $w={12} />
            <Ico w={17} h={19}>
              <path d="M3.500 0v20" stroke="#222" strokeWidth="1.800" strokeDasharray="2 1.500" /><circle cx="3.500" cy="9.500" r="3.200" fill="#222" />
              <path d="M12.500 10v8M8.500 14h8" stroke="#444" strokeWidth="1.800" />
            </Ico>
            <Spacer $w={17} />
            <Label $size={21.5} $w={700} $ls={0.62} $color="#2b2b2b" $drop={1}>pcompClass3-5-2020</Label>
            <Spacer $w={8} />
            <Label $size={16} $ls={-0.6} $color="#777" $drop={4}>Main</Label>
            <Spacer $w={37} />
            <Ico w={20} h={20}>
              <rect width="20" height="20" rx="2.500" fill="#2059b5" />
              <path d="M10 3l8 4-8 4-6-3v6H3V7.500z" fill="#fff" /><path d="M5.500 10l4.500 2.300 4.500-2.300v4L10 16l-4.500-2z" fill="#fff" />
            </Ico>
            <Spacer />
            <Ico w={20} h={18}><path d="M10 1c5.500 0 9.500 3 9.500 7s-4 6.500-9 6.500c-2 0-3-.3-4-.5-1 2-3.500 3-5.500 3 1.500-1.500 2-2.500 2-4C1.500 11.500.5 10 .5 8 .5 4 4.500 1 10 1z" fill="#515a62" /></Ico>
            <Spacer $w={12} />
            <Ico w={20} h={18}>
              <path d="M5 1C2 1 3.500 4 3.200 6.500 3 8 2.500 9 .8 9c1.700 0 2.200 1 2.400 2.500C3.500 14 2 17 5 17M15 1c3 0 1.500 3 1.800 5.500.2 1.500.7 2.500 2.400 2.500-1.700 0-2.200 1-2.400 2.500-.3 2.500 1.200 5.500-1.800 5.500" stroke="#444b52" strokeWidth="1.700" />
              <path d="M6 9l3 3.500L14 6" stroke="#444b52" strokeWidth="1.900" />
            </Ico>
            <Spacer $w={10} />
            <HeaderButton $w={87}>App Store</HeaderButton>
            <Spacer $w={8} />
            <HeaderButton $w={126}>Learning Center</HeaderButton>
            <Spacer $w={8} />
            <HeaderButton $w={62} $primary>Share</HeaderButton>
            <Spacer $w={10} />
            <Help c="#515a62" />
            <Spacer $w={4} />
            <Caret />
            <Spacer $w={10} />
            <Ico w={24} h={24}>
              <path d="M1 22C0 17 1 14 4 13 1 4 6 1 12 1s11 3 8 12c3 1 4 4 3 9" fill="#1b56b5" />
              <path d="M4 22c0-4 3-5 5-6-5-4-4-11 3-11s8 7 3 11c2 1 5 2 5 6z" fill="#f5f5f5" />
            </Ico>
            <Spacer $w={4} />
            <Label $color="#3c3c3c" $ls={-0.12}>Zevensuy Rodriguez</Label>
            <Spacer $w={4} />
            <Caret w={7} />
            <Spacer $w={5} />
          </Header>

          <Toolbar>
            <Slot><Ico w={14} h={13}><path d="M0 5.500L6 0v3.500c5 0 8 3.500 7 9-1.500-3.500-3-5-7-5V11z" fill="#222" /></Ico></Slot>
            <Slot><Ico w={14} h={13}><path d="M14 5.500L8 0v3.500c-5 0-8 3.500-7 9 1.500-3.500 3-5 7-5V11z" fill="#999" /></Ico></Slot>
            <Sep $r={10} />
            <Pencil />
            <Spacer $w={5} />
            <Label $color="#444">Sketch</Label>
            <Spacer />
            <Sep $l={11} />
            <Slot><Extrude /></Slot>
            <Slot>{T.revolve}</Slot>
            <Slot>{T.sweep}</Slot>
            <Slot>{T.loft}</Slot>
            <Slot>{T.thicken}</Slot>
            <Slot $w={16}><Chevron w={10} sw={1.9} /></Slot>
            <Sep $l={4} />
            <Slot>{T.fillet}</Slot>
            <Slot>{T.chamfer}</Slot>
            <Slot>{T.draft}</Slot>
            <Slot>{T.rib}</Slot>
            <Slot>{T.shell}</Slot>
            <Slot>{T.hole}</Slot>
            <Sep />
            <Slot>{T.pattern}</Slot>
            <Slot $w={16}><Chevron w={10} sw={1.9} /></Slot>
            <Slot>{T.bool}</Slot>
            <Spacer $w={582} />
            <Slot>{T.split}</Slot>
            <Slot>{T.sheetA}</Slot>
            <Slot>{T.sheetB}</Slot>
            <Slot>{T.flange}</Slot>
            <Slot>{T.bend}</Slot>
            <Slot>{T.joint}</Slot>
            <Slot>{T.corner}</Slot>
            <Slot>{T.finish}</Slot>
            <Sep $l={1} $r={2} />
            <Slot>
              <Ico>
                <rect x=".6" y=".6" width="18.800" height="18.800" rx="2" stroke="#777" strokeWidth="1.200" />
                <text x="10" y="13.800" textAnchor="middle" fontSize="10.500" fill="#333" fontFamily={UI}>GG</text>
              </Ico>
            </Slot>
            <Slot>
              <Ico>
                <rect x=".7" y=".7" width="18.600" height="18.600" rx="2" stroke="#444" strokeWidth="1.300" strokeDasharray="4 2.800" />
                <path d="M10 6v8M6 10h8" stroke="#222" strokeWidth="2" />
              </Ico>
            </Slot>
            <Spacer $w={11} />
            <SearchTools>
              <Label $ls={-0.15}>Search tools...</Label>
              <Spacer $w={4} />
              <Key $w={19}>alt</Key>
              <Key $w={18}>C</Key>
            </SearchTools>
            <Spacer $w={125} />
          </Toolbar>

          <Workspace>
            <FeatureList />
            <Canvas>
              <Scene />
              <PanelToggle>
                <Ico w={18} h={18}>
                  <path d="M0 1l3 3 3-3" stroke="#222" strokeWidth="1.600" /><path d="M3 5v13" stroke="#777" strokeWidth="2" />
                  <path d="M8 1.500h10M5 6.500h13M5 11.500h13M5 16.500h13" stroke="#222" strokeWidth="1.200" />
                </Ico>
              </PanelToggle>
              <PanelToggle $right>
                <Ico w={20} h={20}>
                  <path d="M5 8l7.500-4L19 7.500V15l-7 4-7-4zM5 8l7 3.500L19 7.500M12 11.500V19" fill="#fff" stroke="#333" strokeWidth="1.200" />
                  <rect width="10" height="8.500" fill="#1d5aa8" /><path d="M1 3h8M1 5.800h8M3.600 1v7M6.500 1v7" stroke="#9db9dc" strokeWidth=".8" />
                </Ico>
              </PanelToggle>
            </Canvas>
          </Workspace>

          <BottomTabs>
            <TabTools>
              <Ico w={54} h={26}>
                <path d="M0 7h16M11 11.500h5M12 15.500h4" stroke="#666" strokeWidth="1.800" /><circle cx="5.500" cy="13.500" r="4.300" stroke="#666" strokeWidth="2.200" /><path d="M8.500 17l3.500 3.500" stroke="#666" strokeWidth="2.400" />
                <path d="M44.500 7v15M37 14.500h15" stroke="#555" strokeWidth="2.800" />
              </Ico>
            </TabTools>
            <DocTab $active>
              <Ico w={19} h={19}>
                <path d="M1 6l2-2h5l2 2v12H3l-2-2zM3.500 6.500V18M1 4.500l2.500 2H9" fill="#eee" stroke={K} strokeWidth="1.200" />
                <path d="M10 2.500L12 1h5l1.500 2v13L17 18h-5l-2-1.500zM10 2.500L13 5v13M13 5h5.500" fill="#eee" stroke={K} strokeWidth="1.200" />
              </Ico>
              Part Studio 1
            </DocTab>
            <DocTab>
              <Ico w={18} h={18}>
                <path d="M1 1h12l4 4v12H5l-4-4z" fill="#f5f5f5" stroke={K} strokeWidth="1.400" />
                <path d="M1 1h12v9l-1 3H4l-3-3z" fill={G} stroke={K} /><path d="M4 4h9v9H4zM1 1l3 3" stroke={K} />
              </Ico>
              Assembly 1
            </DocTab>
          </BottomTabs>

          <Overlay><ExportDialog /></Overlay>
        </Application>
        <Downloads />
      </Browser>

      <Taskbar>
        <TaskItem $h={40}>{L.win}</TaskItem>
        <TaskItem $h={40}>{L.search}</TaskItem>
        <TaskItem $h={40}>{L.cortana}</TaskItem>
        <TaskItem $h={40}>{L.view}</TaskItem>
        <VSpace $h={2} />
        <TaskItem $h={47}>{L.explorer}</TaskItem>
        <TaskItem $h={47}>{L.outlook}</TaskItem>
        <TaskItem $h={47}>{L.firefox}</TaskItem>
        <TaskItem $h={47} $active>{L.chrome}</TaskItem>
        <TaskItem $h={47}>{L.store}</TaskItem>
        <TaskItem $h={47}>{L.atom}</TaskItem>
        <TaskItem $h={47}>{L.ubuntu}</TaskItem>
        <TaskItem $h={47}>{L.teams}</TaskItem>
        <TaskItem $h={47}>{L.edge}</TaskItem>
        <VSpace $h={267} />
        <TrayRow>
          <Ico w={7} h={12}><path d="M6.500.5L1 6l5.500 5.500" stroke="#fff" strokeWidth="1.300" /></Ico>
        </TrayRow>
        <TrayRow>
          <Ico w={15} h={9}><path d="M.6.600h12.800v7.800H.6z" stroke="#fff" strokeWidth="1.200" /><path d="M2 2h7v5H2zM14 3h1v3h-1z" fill="#fff" /></Ico>
          <Ico w={16} h={10}><path d="M4 4c1-4 7-5 9-1 3 0 4 6 0 7H3c-4-1-4-6 1-6z" fill="#0f6cc8" /><path d="M2 9c2-4 6-5 8-3 3-1 6 0 6 2 0 1-1 2-3 2H3z" fill="#2ba5ea" /></Ico>
        </TrayRow>
        <TrayRow>
          <Ico w={13} h={12}>
            <path d="M.6 11.500C.6 5 6 .6 12.500.6M3.600 11.500c0-4.500 4-8 9-8M6.600 11.500c0-3 2.500-5.200 6-5.200M9.300 11.500c0-1.500 1-2.500 3-2.700" stroke="#fff" strokeWidth="1.100" /><circle cx="11.300" cy="10.600" r="1.300" fill="#fff" />
          </Ico>
          <Ico w={15} h={12}><path d="M.6 4h2l3-3.400v11L2.600 8.500h-2zM9 3.500l5 5M14 3.500l-5 5" stroke="#fff" strokeWidth="1.100" /></Ico>
        </TrayRow>
        <TrayRow>
          <Ico w={16} h={13}><path d="M4 0l4 2.500L4 5 0 2.500zM12 0l4 2.500L12 5 8 2.500zM4 5l4 2.500L4 10 0 7.500zM12 5l4 2.500-4 2.500-4-2.500zM8 8.700l3.500 2.200L8 13l-3.500-2.100z" fill="#fff" /></Ico>
        </TrayRow>
        <TaskItem $h={30}>
          <Ico w={17} h={16}>
            <path d="M7 15l1-6 5-8 2 1.200-3.500 9L7 15zM4 8c-3 0-4 3-3 5s4 2 5 1M12 8c3-2 5 0 3.500 2H12" stroke="#fff" strokeWidth="1.300" />
          </Ico>
        </TaskItem>
        <VSpace $h={12} />
        <Clock>2:54 PM<br />3/5/2020</Clock>
        <VSpace $h={13} />
        <TaskItem $h={26}>
          <Ico w={17} h={16}><path d="M9 12.500H7l-3 2.500v-2.500H.6V.600h15.800v9" stroke="#fff" strokeWidth="1.200" /><path d="M10 14.500c3 0 6-2 6-6 1.500 4-1 8-4 7.500z" fill="#fff" /></Ico>
        </TaskItem>
        <ShowDesktop />
      </Taskbar>
    </Screen>
  );
}
